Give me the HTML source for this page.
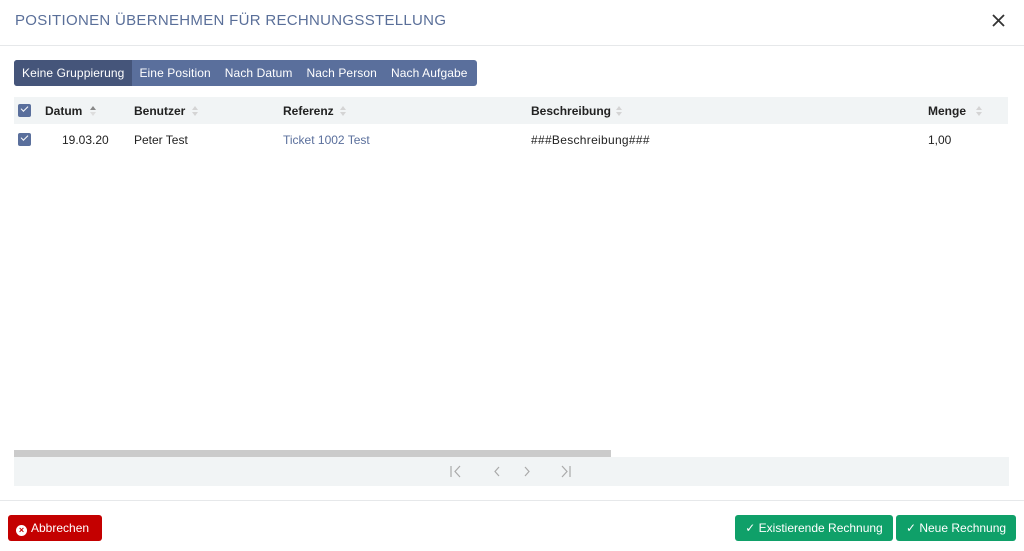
<!DOCTYPE html><html><head><style>
body{margin:0;width:1024px;height:551px;background:#fff;font-family:"Liberation Sans",sans-serif;position:relative;overflow:hidden;color:#222}
.a{position:absolute}
.title{left:15px;top:12px;font-size:15px;color:#5a6f99;letter-spacing:.3px}
.hdrline{left:0;top:45px;width:1024px;height:1px;background:#e6e8ea}
.grp{left:14px;top:60px;height:26px;width:463px;background:#5a6f9c;border-radius:3px;display:flex;font-size:12px;color:#fff;overflow:hidden;white-space:nowrap}
.grp span{padding:0 7px;line-height:26px;letter-spacing:.1px;flex-shrink:0}
.grp span.on{background:#45557a;padding:0 8px}
.th{left:14px;top:97px;width:994px;height:27px;background:#f1f4f5}
.cb{width:13px;height:13px;background:#5a6f9c;border-radius:2px}
.cb:after{content:"";position:absolute;left:3px;top:2px;width:6px;height:3px;border-left:1.6px solid #fff;border-bottom:1.6px solid #fff;transform:rotate(-45deg)}
.h{font-size:12px;font-weight:bold;top:104px}
.c{font-size:12px;top:133px}
.pager{left:14px;top:457px;width:995px;height:29px;background:#f1f4f5}
.btn{top:515px;height:26px;border-radius:3px;color:#fff;font-size:12px;line-height:26px}
</style></head><body>
<div class="a title">POSITIONEN ÜBERNEHMEN FÜR RECHNUNGSSTELLUNG</div>
<svg class="a" style="left:992px;top:14px" width="13" height="13"><path d="M1 1L12 12M12 1L1 12" stroke="#333" stroke-width="1.8"/></svg>
<div class="a hdrline"></div>
<div class="a grp"><span class="on">Keine Gruppierung</span><span>Eine Position</span><span>Nach Datum</span><span>Nach Person</span><span>Nach Aufgabe</span></div>
<div class="a th"></div>
<div class="a cb" style="left:18px;top:104px"></div>
<svg class="a" width="0" height="0"><defs><g id="s"><path d="M0 4L3 0L6 4Z"/><path d="M0 6L3 10L6 6Z"/></g></defs></svg>
<div class="a h" style="left:45px">Datum</div><svg class="a" style="left:90px;top:106px" width="6" height="10"><path d="M0 4L3 0L6 4Z" fill="#888"/><path d="M0 6L3 10L6 6Z" fill="#ddd"/></svg>
<div class="a h" style="left:134px">Benutzer</div><svg class="a" style="left:192px;top:106px" width="6" height="10" fill="#d4d4d4"><use href="#s"/></svg>
<div class="a h" style="left:283px">Referenz</div><svg class="a" style="left:340px;top:106px" width="6" height="10" fill="#d4d4d4"><use href="#s"/></svg>
<div class="a h" style="left:531px">Beschreibung</div><svg class="a" style="left:616px;top:106px" width="6" height="10" fill="#d4d4d4"><use href="#s"/></svg>
<div class="a h" style="left:928px">Menge</div><svg class="a" style="left:976px;top:106px" width="6" height="10" fill="#d4d4d4"><use href="#s"/></svg>
<div class="a cb" style="left:18px;top:133px"></div>
<div class="a c" style="left:62px">19.03.20</div>
<div class="a c" style="left:134px">Peter Test</div>
<div class="a c" style="left:283px;color:#5a6f9c">Ticket 1002 Test</div>
<div class="a c" style="left:531px;letter-spacing:.3px">###Beschreibung###</div>
<div class="a c" style="left:928px">1,00</div>
<div class="a" style="left:14px;top:450px;width:597px;height:7px;background:#cbcbcb"></div>
<div class="a pager"><svg class="a" style="left:436px;top:8px" width="140" height="13" fill="none" stroke="#aaa" stroke-width="1.2"><path d="M1 1V12M10 1L5 6.5L10 12M49 2L45 6.5L49 11M75 2L79 6.5L75 11M112 1L117 6.5L112 12M120 1V12"/></svg></div>
<div class="a" style="left:0;top:500px;width:1024px;height:1px;background:#e6e8ea"></div>
<div class="a btn" style="left:8px;width:94px;background:#c40000"><span style="display:inline-block;width:11px;height:11px;border-radius:50%;background:#fff;color:#c40000;font-size:9px;line-height:11px;text-align:center;margin:0 4px 0 8px;font-weight:bold;vertical-align:-1px">×</span>Abbrechen</div>
<div class="a btn" style="left:735px;width:158px;background:#0fa069;text-align:center">✓ Existierende Rechnung</div>
<div class="a btn" style="left:896px;width:120px;background:#0fa069;text-align:center">✓ Neue Rechnung</div>
</body></html>
